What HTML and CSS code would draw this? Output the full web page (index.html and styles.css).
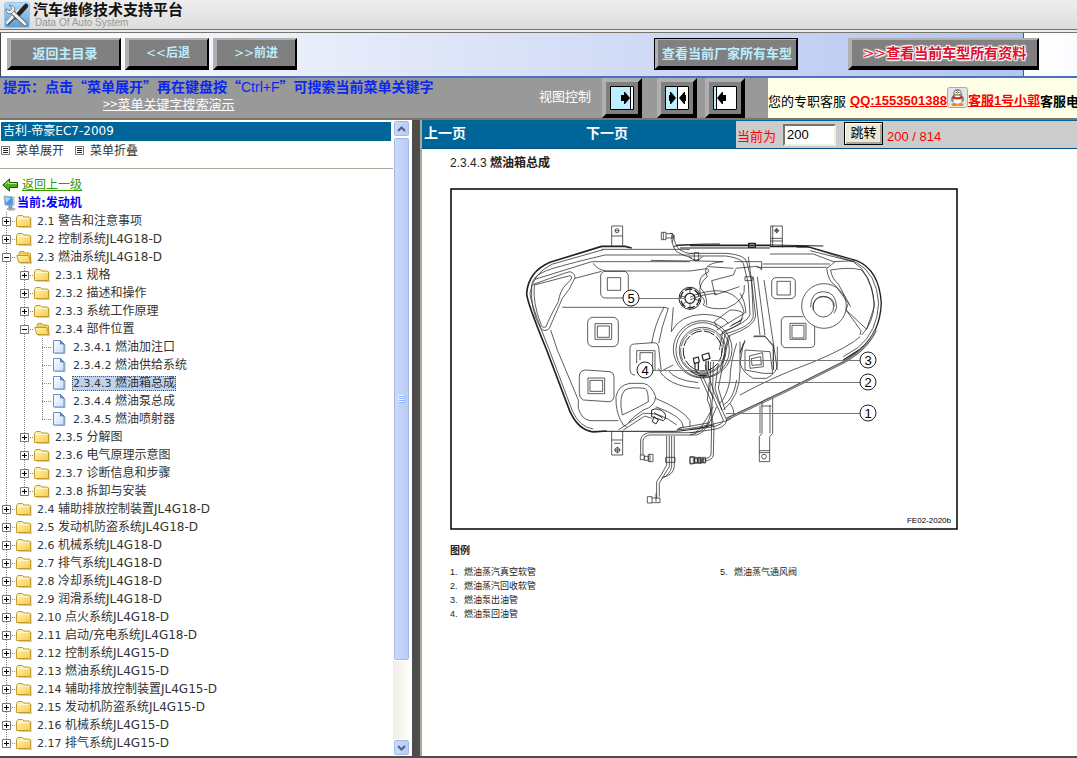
FILE: index.html
```html
<!DOCTYPE html>
<html lang="zh-CN">
<head>
<meta charset="utf-8">
<title>汽车维修技术支持平台</title>
<link rel="stylesheet" href="styles.css">
</head>
<body>
<svg class="defs" aria-hidden="true">
  <defs>
    <linearGradient id="gold" x1="0" y1="0" x2="1" y2="1"><stop offset="0" stop-color="#fff8b8"/><stop offset="1" stop-color="#fbc94c"/></linearGradient>
    <linearGradient id="page" x1="0" y1="0" x2="1" y2="1"><stop offset="0" stop-color="#fff"/><stop offset="1" stop-color="#c4defa"/></linearGradient>
    <linearGradient id="sky" x1="0" y1="0" x2="0" y2="1"><stop offset="0" stop-color="#b8dcf4"/><stop offset="1" stop-color="#5a9cd4"/></linearGradient>
  </defs>
  <symbol id="plus" viewBox="0 0 9 9"><path fill="#fff" stroke="#777" d="M.5.5h8v8h-8z"/><path stroke="#000" d="M2 4.500h5M4.500 2v5"/></symbol>
  <symbol id="minus" viewBox="0 0 9 9"><path fill="#fff" stroke="#777" d="M.5.5h8v8h-8z"/><path stroke="#000" d="M2 4.500h5"/></symbol>
  <symbol id="folder" viewBox="0 0 16 16"><path fill="#999" opacity=".5" d="M2 13.500h13.500V5h.5v10H3z"/><path fill="url(#gold)" stroke="#c39a2c" d="M.5 12.500v-8l1.500-2h4.500l1.500 1.500h5.500l1 1v8.500h-14z"/><path stroke="#fff8c8" d="M2 5.500h11"/></symbol>
  <symbol id="folder-open" viewBox="0 0 16 16"><path fill="#999" opacity=".5" d="M4 14h11l1-7v8H4z"/><path fill="#f4cf60" stroke="#c39a2c" d="M3 11.500V4l1-1.500h4L9.500 4h4l1 1v7z"/><path fill="url(#gold)" stroke="#c39a2c" d="M.7 6.500h11.800l2.300 7H3z"/></symbol>
  <symbol id="leaf" viewBox="0 0 16 16"><path fill="#777" opacity=".5" d="M12 5h1.500v10H3v-1h9z"/><path fill="url(#page)" stroke="#6d8fc4" d="M1.500 1.500h7l3.500 3.500v9H1.500z"/><path fill="#7ba3dd" stroke="#41659e" stroke-width=".7" d="M8.500 1.500V5H12z"/></symbol>
  <symbol id="list" viewBox="0 0 9 9"><path fill="#fff" stroke="#777" d="M.5.5h8v8h-8z"/><path stroke="#222" d="M2 2.500h5M2 4.500h5M2 6.500h5"/></symbol>
</svg>

<header class="brand">
  <svg class="logo" viewBox="0 0 26 26"><rect x=".5" y=".5" width="25" height="25" rx="2" fill="url(#sky)" stroke="#9cc6e4"/><path d="M3 22L16 8" stroke="#eee" stroke-width="4"/><path d="M3 23L17 9" stroke="#777"/><path d="M12 15L22 4" stroke="#222" stroke-width="4.500" stroke-linecap="round"/><path d="M4 23L13 14" stroke="#555" stroke-width="1.500"/><path d="M8 10l13 12" stroke="#666" stroke-width="4.500" stroke-linecap="round"/><path d="M7 9l14 13" stroke="#f3f5f7" stroke-width="2.800" stroke-linecap="round"/><path d="M5 3l3 3-2 3-4-2c0 4 3 6 6 4s5-7-3-8z" fill="#f3f5f7" stroke="#666" stroke-width=".8"/></svg>
  <div><h1>汽车维修技术支持平台</h1><p>Data Of Auto System</p></div>
</header>

<nav class="toolbar">
  <button class="bevel wide">返回主目录</button>
  <button class="bevel step"><span>&lt;&lt;</span>后退</button>
  <button class="bevel step"><span>&gt;&gt;</span>前进</button>
  <button class="bevel framed">查看当前厂家所有车型</button>
  <button class="bevel promo"><span>&gt;&gt;</span>查看当前车型所有资料</button>
</nav>

<div class="hintbar">
  <div class="hint">
    <p>提示：点击“菜单展开”再在键盘按“<span>Ctrl+F</span>”可搜索当前菜单关键字</p>
    <a href="#">&gt;&gt;菜单关键字搜索演示</a>
  </div>
  <div class="views">
    <span>视图控制</span>
    <button class="bevel view" aria-label="展开菜单"><svg viewBox="0 0 24 24"><path fill="#fff" d="M0 0h24v24H0z"/><path fill="#bdeeff" d="M0 0h20v24H0z"/><path d="M11 9h3V6h1l5 6-5 6h-1v-3h-3z"/><path d="M20.500 0v24" stroke="#000"/><path fill="none" stroke="#000" d="M.5.5h23v23H.5z"/></svg></button>
    <button class="bevel view gap" aria-label="双栏"><svg viewBox="0 0 24 24"><path fill="#fff" d="M0 0h24v24H0z"/><path fill="#bdeeff" d="M0 0h12v24H0z"/><path d="M4 9h1V6h1l5 6-5 6H5v-3H4zM21 9h-1V6h-1l-5 6 5 6h1v-3h1z"/><path d="M12.500 0v24" stroke="#000"/><path fill="none" stroke="#000" d="M.5.5h23v23H.5z"/></svg></button>
    <button class="bevel view" aria-label="收起菜单"><svg viewBox="0 0 24 24"><path fill="#fff" d="M0 0h24v24H0z"/><path fill="#bdeeff" d="M0 0h3v24H0z"/><path d="M13 9h-3V6H9l-5 6 5 6h1v-3h3z"/><path d="M3.500 0v24" stroke="#000"/><path fill="none" stroke="#000" d="M.5.5h23v23H.5z"/></svg></button>
  </div>
  <div class="service">
    <span class="lead">您的专职客服</span>
    <a href="#">QQ:1553501388</a>
    <svg class="qq" viewBox="0 0 21 21"><rect x=".5" y=".5" width="20" height="20" rx="2" fill="#e4e4e4" stroke="#aaa"/><path d="M4 14q0-4 2-6 0-6 4.500-6T15 8q2 2 2 6l-2 1q-4 4-9 0z" fill="#85898c"/><ellipse cx="10.500" cy="13" rx="4" ry="4.500" fill="#fff"/><path d="M6 9q4.500 2.500 9 0l1 2q-5 3-11 0z" fill="#d02818"/><circle cx="9" cy="5.500" r="1.500" fill="#fff"/><circle cx="12" cy="5.500" r="1.500" fill="#fff"/><circle cx="9.200" cy="5.500" r=".6"/><circle cx="11.800" cy="5.500" r=".6"/><path d="M7.500 8q3-1.500 6 0-3 2-6 0z" fill="#f0a020"/><ellipse cx="7.500" cy="17.500" rx="3" ry="1.500" fill="#e88c20"/><ellipse cx="13.500" cy="17.500" rx="3" ry="1.500" fill="#e88c20"/></svg>
    <a href="#">客服1号小郭</a><strong>客服电</strong>
  </div>
</div>

<main class="frames">
  <section class="side">
    <div class="menu">
      <h2>吉利-帝豪EC7-2009</h2>
      <div class="fold">
        <svg><use href="#list"/></svg><a href="#">菜单展开</a>
        <svg><use href="#list"/></svg><a href="#">菜单折叠</a>
      </div>
      <div class="crumb up">
        <svg viewBox="0 0 16 14"><path d="M.8 7L7.500 1v3.500h8v5h-8V13z" fill="#4fae1e" stroke="#17570a"/><path d="M3 6.500l3.500-3v2h8" fill="none" stroke="#b6f08a"/></svg>
        <a href="#">返回上一级</a>
      </div>
      <div class="crumb here">
        <svg viewBox="0 0 14 16"><ellipse cx="9" cy="14" rx="4.500" ry="1.800" fill="#b0b4bc"/><path d="M6 10l4 1v3H7z" fill="#8a909c"/><path d="M2 1l9 1v9l-8-1z" fill="#4a98e4" stroke="#9cb4cc"/><path d="M3 2l6 1-5 5z" fill="#a4d4fc"/><path d="M11 2l2-1v9l-2 1z" fill="#ccd4de"/></svg>
        <strong>当前:发动机</strong>
      </div>
      <ul class="tree">
        <li><div class="row"><button aria-label="展开"><svg><use href="#plus"/></svg></button><svg class="ic"><use href="#folder"/></svg><a href="#"><i>2.1 </i>警告和注意事项</a></div></li>
        <li><div class="row"><button aria-label="展开"><svg><use href="#plus"/></svg></button><svg class="ic"><use href="#folder"/></svg><a href="#"><i>2.2 </i>控制系统JL4G18-D</a></div></li>
        <li><div class="row"><button aria-label="折叠"><svg><use href="#minus"/></svg></button><svg class="ic"><use href="#folder-open"/></svg><a href="#"><i>2.3 </i>燃油系统JL4G18-D</a></div>
          <ul>
            <li><div class="row"><button aria-label="展开"><svg><use href="#plus"/></svg></button><svg class="ic"><use href="#folder"/></svg><a href="#"><i>2.3.1 </i>规格</a></div></li>
            <li><div class="row"><button aria-label="展开"><svg><use href="#plus"/></svg></button><svg class="ic"><use href="#folder"/></svg><a href="#"><i>2.3.2 </i>描述和操作</a></div></li>
            <li><div class="row"><button aria-label="展开"><svg><use href="#plus"/></svg></button><svg class="ic"><use href="#folder"/></svg><a href="#"><i>2.3.3 </i>系统工作原理</a></div></li>
            <li><div class="row"><button aria-label="折叠"><svg><use href="#minus"/></svg></button><svg class="ic"><use href="#folder-open"/></svg><a href="#"><i>2.3.4 </i>部件位置</a></div>
              <ul>
                <li><div class="row leaf"><svg class="ic"><use href="#leaf"/></svg><a href="#"><i>2.3.4.1 </i>燃油加注口</a></div></li>
                <li><div class="row leaf"><svg class="ic"><use href="#leaf"/></svg><a href="#"><i>2.3.4.2 </i>燃油供给系统</a></div></li>
                <li><div class="row leaf"><svg class="ic"><use href="#leaf"/></svg><a href="#" class="selected"><i>2.3.4.3 </i>燃油箱总成</a></div></li>
                <li><div class="row leaf"><svg class="ic"><use href="#leaf"/></svg><a href="#"><i>2.3.4.4 </i>燃油泵总成</a></div></li>
                <li><div class="row leaf"><svg class="ic"><use href="#leaf"/></svg><a href="#"><i>2.3.4.5 </i>燃油喷射器</a></div></li>
              </ul>
            </li>
            <li><div class="row"><button aria-label="展开"><svg><use href="#plus"/></svg></button><svg class="ic"><use href="#folder"/></svg><a href="#"><i>2.3.5 </i>分解图</a></div></li>
            <li><div class="row"><button aria-label="展开"><svg><use href="#plus"/></svg></button><svg class="ic"><use href="#folder"/></svg><a href="#"><i>2.3.6 </i>电气原理示意图</a></div></li>
            <li><div class="row"><button aria-label="展开"><svg><use href="#plus"/></svg></button><svg class="ic"><use href="#folder"/></svg><a href="#"><i>2.3.7 </i>诊断信息和步骤</a></div></li>
            <li><div class="row"><button aria-label="展开"><svg><use href="#plus"/></svg></button><svg class="ic"><use href="#folder"/></svg><a href="#"><i>2.3.8 </i>拆卸与安装</a></div></li>
          </ul>
        </li>
        <li><div class="row"><button aria-label="展开"><svg><use href="#plus"/></svg></button><svg class="ic"><use href="#folder"/></svg><a href="#"><i>2.4 </i>辅助排放控制装置JL4G18-D</a></div></li>
        <li><div class="row"><button aria-label="展开"><svg><use href="#plus"/></svg></button><svg class="ic"><use href="#folder"/></svg><a href="#"><i>2.5 </i>发动机防盗系统JL4G18-D</a></div></li>
        <li><div class="row"><button aria-label="展开"><svg><use href="#plus"/></svg></button><svg class="ic"><use href="#folder"/></svg><a href="#"><i>2.6 </i>机械系统JL4G18-D</a></div></li>
        <li><div class="row"><button aria-label="展开"><svg><use href="#plus"/></svg></button><svg class="ic"><use href="#folder"/></svg><a href="#"><i>2.7 </i>排气系统JL4G18-D</a></div></li>
        <li><div class="row"><button aria-label="展开"><svg><use href="#plus"/></svg></button><svg class="ic"><use href="#folder"/></svg><a href="#"><i>2.8 </i>冷却系统JL4G18-D</a></div></li>
        <li><div class="row"><button aria-label="展开"><svg><use href="#plus"/></svg></button><svg class="ic"><use href="#folder"/></svg><a href="#"><i>2.9 </i>润滑系统JL4G18-D</a></div></li>
        <li><div class="row"><button aria-label="展开"><svg><use href="#plus"/></svg></button><svg class="ic"><use href="#folder"/></svg><a href="#"><i>2.10 </i>点火系统JL4G18-D</a></div></li>
        <li><div class="row"><button aria-label="展开"><svg><use href="#plus"/></svg></button><svg class="ic"><use href="#folder"/></svg><a href="#"><i>2.11 </i>启动/充电系统JL4G18-D</a></div></li>
        <li><div class="row"><button aria-label="展开"><svg><use href="#plus"/></svg></button><svg class="ic"><use href="#folder"/></svg><a href="#"><i>2.12 </i>控制系统JL4G15-D</a></div></li>
        <li><div class="row"><button aria-label="展开"><svg><use href="#plus"/></svg></button><svg class="ic"><use href="#folder"/></svg><a href="#"><i>2.13 </i>燃油系统JL4G15-D</a></div></li>
        <li><div class="row"><button aria-label="展开"><svg><use href="#plus"/></svg></button><svg class="ic"><use href="#folder"/></svg><a href="#"><i>2.14 </i>辅助排放控制装置JL4G15-D</a></div></li>
        <li><div class="row"><button aria-label="展开"><svg><use href="#plus"/></svg></button><svg class="ic"><use href="#folder"/></svg><a href="#"><i>2.15 </i>发动机防盗系统JL4G15-D</a></div></li>
        <li><div class="row"><button aria-label="展开"><svg><use href="#plus"/></svg></button><svg class="ic"><use href="#folder"/></svg><a href="#"><i>2.16 </i>机械系统JL4G15-D</a></div></li>
        <li><div class="row"><button aria-label="展开"><svg><use href="#plus"/></svg></button><svg class="ic"><use href="#folder"/></svg><a href="#"><i>2.17 </i>排气系统JL4G15-D</a></div></li>
      </ul>
    </div>
    <div class="scroll">
      <button aria-label="向上滚动"><svg viewBox="0 0 9 6"><path d="M1 5l3.500-3.500L8 5" fill="none" stroke="#4d6185" stroke-width="2"/></svg></button>
      <div class="track"><div class="thumb"><svg viewBox="0 0 7 8"><path d="M0 .5h6M0 2.500h6M0 4.500h6M0 6.500h6" stroke="#eef4fe"/><path d="M1 1.500h6M1 3.500h6M1 5.500h6M1 7.500h6" stroke="#8cb0f8"/></svg></div></div>
      <button aria-label="向下滚动"><svg viewBox="0 0 9 6"><path d="M1 1l3.500 3.500L8 1" fill="none" stroke="#4d6185" stroke-width="2"/></svg></button>
    </div>
  </section>
  <div class="splitter"></div>
  <section class="content">
    <div class="pager">
      <div class="links"><a href="#">上一页</a><a href="#">下一页</a></div>
      <form class="jump">
        <label for="pg">当前为</label><input id="pg" type="text" value="200"><button type="button">跳转</button><span>200 / 814</span>
      </form>
    </div>
    <article>
      <h3><span>2.3.4.3</span> 燃油箱总成</h3>
      <svg class="figure" viewBox="450 188 508 342" role="img" aria-label="燃油箱总成">
        <rect x="451" y="189" width="506" height="340" fill="#fff" stroke="#000" stroke-width="1.500"/>
        <g fill="none" stroke="#222" stroke-width="2.200" stroke-linejoin="round">
          <g transform="translate(510 210) scale(.3333)">
            <path stroke-width="5" d="M365 114L345 109H275L120 157Q55 185 50 250Q50 275 110 420"/>
            <path d="M280 119L125 163Q68 192 60 250Q60 275 118 420M285 135Q180 160 130 175Q75 190 65 220M285 135H540M275 118H540M245 155L75 208M245 155H540M250 160Q262 180 290 183H540L590 176Q600 178 594 187Q560 200 572 235Q590 250 590 285M422 151L540 153M195 205L275 184"/>
            <path d="M65 225Q160 190 180 185Q195 190 195 203Q180 240 157 265L118 355Q105 368 92 355Q60 300 65 225zM73 225Q150 205 180 197Q194 200 170 222Q150 240 145 275Q120 320 108 350Q95 357 92 340Q68 280 73 225zM157 292H462Q435 340 425 400M122 360L142 420M475 295Q455 350 446 400M462 292L475 295M490 292L484 365"/>
            <path d="M305 109V48H338V109M305 78H338"/><circle cx="321" cy="62" r="6"/><path d="M315 62h12"/>
            <rect x="272" y="184" width="83" height="80" rx="14"/><rect x="292" y="203" width="40" height="38"/>
            <rect x="233" y="322" width="92" height="88" rx="16"/><rect x="255" y="341" width="50" height="47"/><rect x="262" y="348" width="36" height="34"/>
            <path d="M454 485L446 412Q444 398 430 398L374 402Q360 402 360 416V480Q362 495 375 495M380 460V422H435V480M390 450V428H428V478"/>
            <path d="M485 75Q485 110 500 125Q520 138 545 143M492 75Q492 105 510 120Q525 130 550 132M454 67h14v22h-14zM468 71h20v13h-20M480 70Q500 70 485 98M460 67v22M536 140q24 20 42 0M553 128h13v24h-13z"/>
            <path d="M490 110Q510 102 630 102M500 105H780L940 108M510 114H780" stroke-width="3"/>
            <circle cx="540" cy="265" r="33" stroke-width="3"/><circle cx="540" cy="265" r="28" stroke-width="4" stroke-dasharray="22 7"/><circle cx="540" cy="265" r="15" stroke-width="4"/><path d="M540 232v18M540 280v18M508 257l18 4M555 268l18 5M515 288l13-13"/>
            <ellipse cx="578" cy="418" rx="88" ry="86"/><ellipse cx="578" cy="420" rx="80" ry="82"/><ellipse cx="578" cy="422" rx="70" ry="70"/><ellipse cx="578" cy="423" rx="66" ry="66" stroke-width="2" stroke-dasharray="40 4"/><ellipse cx="578" cy="423" rx="58" ry="60" stroke-width="3" stroke-dasharray="34 6"/>
            <path d="M484 365Q510 315 580 313Q640 315 655 340"/>
          </g>
          <g transform="translate(690 210) scale(.3333)">
            <path stroke-width="4" d="M0 107H240M240 110H320L350 109L500 152Q568 180 574 280Q570 370 510 418L460 450M176 100h20v12h-20z"/>
            <path d="M320 112H360L500 158Q560 190 566 280Q562 365 505 412L460 440M360 122L490 155Q545 190 553 280Q550 340 515 375M0 130H110Q165 135 170 155L185 215 190 320Q185 350 105 372L95 430M0 138H108Q155 145 160 160L175 220 180 315Q170 340 98 365L88 420M175 140L183 200 197 318Q195 350 115 378L105 420M0 152L100 155Q30 160 52 200Q25 220 30 255Q50 270 40 285Q60 300 110 295Q170 270 163 225M55 170L130 175M133 155H215V180Q205 165 190 170L137 175M240 132H370L430 155 500 152M218 162H420M200 172H410M65 212L130 195 137 178M65 212L75 255 148 230M0 262Q30 245 80 242 150 245 163 310L80 360M0 270Q30 253 80 250M150 250Q165 270 168 310"/>
            <path d="M190 200L210 375M202 200L225 375M222 210L262 480M192 378H225L250 410V480M150 395V480M120 378L90 480M165 395L150 425M410 175Q415 215 435 225L475 280 468 300 530 358M422 180Q425 205 445 222L482 290M422 180Q480 170 515 180Q550 220 553 290L530 358M468 300L513 362 510 375M410 175Q425 165 435 155"/>
            <path d="M83 355L73 335 120 300Q150 300 160 310L150 340 90 375M120 350L160 325M125 345L155 332M165 200h22v12h-22z" />
            <circle cx="402" cy="288" r="67"/><path d="M362 292Q362 245 400 245T440 292Q435 305 432 310M369 300Q367 260 400 260T433 290"/><circle cx="400" cy="290" r="31"/>
            <rect x="245" y="203" width="71" height="63" rx="13"/><rect x="261" y="214" width="40" height="41"/>
            <path d="M340 320H288Q274 320 274 334V400Q276 413 288 413H358Q374 413 374 400V348M300 340h48v48h-48zM306 346h36v38h-36z"/>
            <path d="M242 110V48H277V112M248 48V110M242 85H277M242 93H277M252 62h16M260 54v16"/><circle cx="260" cy="62" r="5"/>
          </g>
          <g transform="translate(510 350) scale(.3333)">
            <path stroke-width="5" d="M110 0L180 185Q205 240 250 246L290 243"/><path stroke-width="3" d="M250 244H500Q560 240 610 225"/>
            <path d="M118 0L188 185Q210 232 250 237M142 0L205 150V175Q215 208 240 212H325"/>
            <path d="M227 60L300 65Q312 68 312 80V140Q310 155 295 155L220 150Q208 145 208 130V80Q208 62 227 60z"/><rect x="234" y="84" width="50" height="47"/><rect x="240" y="91" width="38" height="33"/>
            <path d="M350 230L340 225Q316 190 318 140Q325 105 360 100H400Q425 105 437 140Q435 170 400 180Q370 200 355 218M337 195Q325 140 345 120Q360 110 405 115Q415 120 415 155Q400 165 337 195zM325 240L400 190Q450 185 500 225M340 240L405 198 425 205M437 145Q520 180 540 212V230M437 170Q520 200 520 230L500 240"/>
            <path d="M425 180Q445 170 465 190Q470 205 460 212L425 200zM433 188l25 16M432 200L445 210 438 222 427 215z" stroke-width="3"/>
            <path d="M305 243V315H338V243M305 270H338M312 280H332"/><circle cx="322" cy="300" r="7"/><path d="M312 300h20M322 290v20"/>
            <path d="M392 315V270Q395 250 420 248H555Q570 245 610 170M399 315V272Q402 257 420 255H560Q590 250 620 170M391 315h12v14h-12zM403 319h12v12h-12zM415 313h14v22h-14zM420 313v22M470 258V345Q455 375 440 395V445M478 258V350Q460 378 448 400V440M485 258V350Q480 375 455 385M493 258V350Q490 375 460 382M467 322h28v15h-28zM412 440h14v19h-14zM426 444h24v14h-24M438 430v25M540 320h14v20h-14zM554 323h8v15h-8zM564 322h6v17h-6zM572 322h6v17h-6zM580 322h6v17h-6z"/>
            <path d="M445 55Q470 110 570 115M475 60Q490 90 565 98M460 60L490 45M500 240Q560 235 640 215Q690 205 660 160M505 235L600 218"/>
          </g>
          <g transform="translate(690 330) scale(.3333)">
            <path stroke-width="8" stroke="#555" d="M110 267L290 182L460 97Q530 58 557 0"/><path stroke="#fff" stroke-width="1.500" d="M110 268L290 183L460 98Q531 59 557 0"/>
            <path d="M150 195Q250 140 370 96Q480 50 510 20"/>
            <path d="M165 60L240 65 248 130 220 130 165 120zM160 40L150 100Q160 130 190 145H230Q260 130 262 105V50M178 78L218 68 220 110 180 115zM184 86L212 80 214 104 186 106zM165 30L150 70M140 40Q120 100 120 150M190 20H225L250 45V120"/>
            <path d="M28 135L62 210Q68 250 50 285Q30 310 0 315M36 135L70 205M62 95L60 180 100 270Q100 285 60 292L0 298M70 95L68 178 110 270Q108 295 60 300L0 308M45 105L70 180Q60 260 72 290L70 375Q68 390 45 393M58 155L52 210Q65 230 65 285L63 375Q60 385 45 386M85 100L75 175 95 240M105 70L85 175 105 240"/>
            <path d="M150 120Q150 200 100 240M140 150Q130 210 100 225M120 150Q110 200 90 220" />
            <path stroke-width="3.500" d="M10 85l15-4 3 15-15 5zM36 75l20-6 4 16-20 7zM15 100v20M25 98v22M48 92v32M55 92v32M12 120l14 8M30 122h22M0 122Q20 140 50 138M25 135h30"/>
            <path d="M0 382h10v20H0zM14 384h8v16h-8zM25 384h8v16h-8zM35 387h12v10H35z"/>
            <path d="M216 215V310L208 320V395H239V320L248 310V205M210 228V310M240 225V310M214 228H244M208 362H239M208 368H239"/><circle cx="222" cy="380" r="7"/>
          </g>
        </g>
        <g stroke="#777" fill="none"><path d="M639 298.500h47M653 370.500h57M711 360.500h150M716 382.500h145M726 413.500h135"/></g>
        <g class="marks">
          <circle cx="631" cy="298" r="8"/><text x="631" y="303">5</text>
          <circle cx="645" cy="370" r="8"/><text x="645" y="375">4</text>
          <circle cx="868" cy="360" r="8"/><text x="868" y="365">3</text>
          <circle cx="868" cy="382" r="8"/><text x="868" y="387">2</text>
          <circle cx="868" cy="413" r="8"/><text x="868" y="418">1</text>
        </g>
        <text class="code" x="951" y="523">FE02-2020b</text>
      </svg>
      <h4>图例</h4>
      <ol class="legend">
        <li>燃油蒸汽真空软管</li><li>燃油蒸汽回收软管</li><li>燃油泵出油管</li><li>燃油泵回油管</li><li>燃油蒸气通风阀</li>
      </ol>
    </article>
  </section>
</main>
</body>
</html>
```
FILE: styles.css
```css
* { box-sizing: border-box; }

body {
  margin: 0;
  height: 100vh;
  display: flex;
  flex-direction: column;
  overflow: hidden;
  background: #fff;
  color: #333;
  font: 12px/18px "DejaVu Sans", "Noto Sans CJK SC", sans-serif;
}

h1, h2, h3, h4, p, ul, ol { margin: 0; padding: 0; }
ul { list-style: none; }
i { font-style: normal; }
svg { display: block; flex: none; }
.defs { position: absolute; width: 0; height: 0; }
a { color: inherit; text-decoration: none; }
button { padding: 0; font: inherit; white-space: nowrap; }

/* Brand strip */
.brand {
  display: flex;
  flex: none;
  gap: 3px;
  height: 33px;
  padding: 2px 4px;
  background: linear-gradient(#eee, #ddd);
  border-bottom: 4px double #77756c;
}
.logo { width: 26px; height: 26px; }
.brand h1 {
  color: #111;
  font: bold 15px/14px "Noto Sans CJK SC", sans-serif;
}
.brand p {
  padding-left: 2px;
  color: #999;
  font: 10px/14px "Liberation Sans", sans-serif;
}

/* Toolbar */
.toolbar {
  display: flex;
  flex: none;
  align-items: center;
  gap: 4px;
  height: 45px;
  padding: 0 0 2px 6px;
  border-left: 1px solid #444;
  border-bottom: 2px solid #4a70c0;
  background: linear-gradient(90deg, #fff, #b4c4f0 1022px, #555 1022px, #555 1023px) 0 0 / 1023px 100%;
}
.bevel {
  background: #808080;
  color: #bdeeff;
  border: 0 solid;
  border-color: #b0b0b0 #000 #000 #b0b0b0;
  border-width: 2px 2px 4px 4px;
  height: 32px;
  font: bold 12px/18px "Noto Sans CJK SC", sans-serif;
}
.bevel span { font-family: "DejaVu Sans", sans-serif; font-weight: normal; }
.wide { width: 114px; font-size: 13px; }
.step { width: 84px; }
.framed {
  width: 144px;
  margin-left: 353px;
  outline: 1px solid #000;
  outline-offset: -1px;
  font-size: 13px;
}
.promo {
  width: 191px;
  margin-left: 46px;
  color: #e01030;
  font-size: 14px;
  text-shadow: 0 0 2px #fff, 1px 1px 1px #fff, -1px -1px 1px #fff, 1px -1px 1px #fff, -1px 1px 1px #fff, 0 0 3px #fff;
}

/* Search hint and customer service */
.hintbar {
  display: flex;
  flex: none;
  height: 40px;
  background: #999;
  white-space: nowrap;
  font: 13px/18px "Noto Sans CJK SC", sans-serif;
}
.hint { width: 539px; padding-left: 3px; flex: none; }
.hint p { color: #0a28f0; font-weight: bold; font-size: 14px; line-height: 16px; }
.hint p span { font: 14px/16px "Liberation Sans", sans-serif; }
.hint a { margin-left: 100px; color: #fff; text-decoration: underline; }
.views {
  display: flex;
  flex: none;
  width: 229px;
  align-items: center;
  gap: 8px;
  color: #fff;
}
.views span { width: 55px; padding-bottom: 4px; }
.view { width: 40px; height: 40px; border-width: 4px; padding: 4px; }
.view svg { width: 24px; height: 24px; }
.gap { margin-left: 7px; }
.service {
  display: flex;
  flex: 1;
  min-width: 0;
  align-items: center;
  overflow: hidden;
  padding-top: 6px;
  background: #ffffe8;
  color: #000;
}
.lead { margin-right: 4px; }
.service a {
  color: #f00;
  font: bold 13px/16px "Liberation Sans", "Noto Sans CJK SC", sans-serif;
  text-decoration: underline;
}
.qq { width: 21px; height: 21px; margin-bottom: 8px; }

/* Frames */
.frames {
  display: flex;
  flex: 1;
  min-height: 0;
  border-top: 2px solid #77756c;
  border-bottom: 2px solid #4d4d4d;
}
.side { display: flex; flex: none; width: 412px; }
.menu { flex: 1; min-width: 0; overflow: hidden; padding-top: 2px; }
.menu h2 {
  margin: 0 2px 0 1px;
  padding-left: 2px;
  background: #069;
  color: #fff;
  font-weight: normal;
  font-size: 12px;
  line-height: 19px;
}
.fold {
  display: flex;
  align-items: center;
  height: 28px;
  margin-bottom: 7px;
  padding: 0 0 8px 1px;
  border-bottom: 1px solid #aaa99a;
}
.fold svg { width: 9px; height: 9px; margin-right: 6px; }
.fold a { margin-right: 11px; }
.crumb { display: flex; align-items: center; height: 18px; padding-left: 2px; }
.up { color: #390; gap: 4px; }
.up a { text-decoration: underline; }
.up svg { width: 16px; height: 14px; }
.here { color: #00f; gap: 1px; }
.here svg { width: 14px; height: 16px; }

.tree, .tree ul {
  background: repeating-linear-gradient(#888 0 1px, transparent 1px 2px) 6px 0 / 1px calc(100% - 9px) no-repeat;
}
.tree ul { margin-left: 18px; }
.row {
  display: flex;
  align-items: center;
  height: 18px;
  padding-left: 2px;
  white-space: nowrap;
  background: repeating-linear-gradient(90deg, #888 0 1px, transparent 1px 2px) 6px 9px / 10px 1px no-repeat;
}
.row button { border: 0; background: none; width: 9px; height: 9px; margin-right: 5px; }
.row button svg { width: 9px; height: 9px; }
.leaf { padding-left: 16px; }
.ic { width: 16px; height: 16px; margin-right: 4px; }
.row a { padding: 0 1px; line-height: 15px; white-space: pre; }
.row i { font-size: 11px; }
.selected { background: #c0d2ec; outline: 1px dotted #555; outline-offset: -1px; }

.scroll {
  display: flex;
  flex: none;
  flex-direction: column;
  width: 19px;
  padding-right: 2px;
  background: #fff;
}
.scroll button, .thumb {
  display: grid;
  place-items: center;
  width: 17px;
  border: 1px solid #fff;
  border-radius: 3px;
  background: linear-gradient(90deg, #cddafc, #b6cbf8);
  box-shadow: inset 0 0 0 1px #a4b8e6;
}
.scroll button { height: 17px; flex: none; }
.scroll button svg { width: 9px; height: 6px; }
.track { flex: 1; background: linear-gradient(90deg, #eeede5, #fefefb); }
.thumb { height: 87%; }
.thumb svg { width: 7px; height: 8px; }

.splitter { flex: none; width: 8px; background: #4d4d4d; }

/* Page viewer */
.content { flex: 1; min-width: 0; border-left: 2px solid #aca899; background: #fff; }
.pager {
  display: flex;
  height: 29px;
  background: #069;
  border-bottom: 1px solid #004f86;
}
.links {
  display: flex;
  width: 314px;
  gap: 120px;
  padding: 4px 2px;
  color: #fff;
  font-weight: bold;
  font-size: 14px;
}
.jump {
  display: flex;
  flex: 1;
  align-items: center;
  margin-top: 1px;
  padding-left: 1px;
  background: #ccc;
  color: #f00;
  font: 13px/18px "Liberation Sans", "Noto Sans CJK SC", sans-serif;
}
.jump label { padding-top: 4px; }
.jump input {
  width: 53px;
  height: 22px;
  margin: 0 8px 0 7px;
  padding: 0 2px;
  border: 2px solid;
  border-color: #77756c #f1efe2 #f1efe2 #77756c;
  font: inherit;
}
.jump button {
  width: 39px;
  height: 23px;
  margin: 0 4px 3px 0;
  border: 1px solid #000;
  background: #ece9d8;
  box-shadow: inset 1px 1px #fff, inset -2px -2px #aca899;
}
.jump span { padding-top: 4px; }

article { padding: 5px 28px; color: #222; }
article h3 { font: bold 12px/18px "Liberation Sans", "Noto Sans CJK SC", sans-serif; }
article h3 span { font-weight: normal; }
.figure { width: 100%; max-width: 508px; margin: 16px 0 12px; }
.marks circle { fill: #fff; stroke: #222; }
.marks text { font: 13px "Liberation Sans", sans-serif; text-anchor: middle; }
.code { font: 8px "Liberation Sans", sans-serif; text-anchor: end; }
article h4 { font: bold 10px/16px "Noto Sans CJK SC", sans-serif; margin-bottom: 7px; }
.legend {
  display: grid;
  grid-template-rows: repeat(4, 14px);
  grid-auto-flow: column;
  grid-auto-columns: 270px;
  counter-reset: part;
  list-style: none;
  font: 9px/14px "Liberation Sans", "Noto Sans CJK SC", sans-serif;
}
.legend li { display: flex; counter-increment: part; }
.legend li::before { content: counter(part) "."; width: 14px; }
```
